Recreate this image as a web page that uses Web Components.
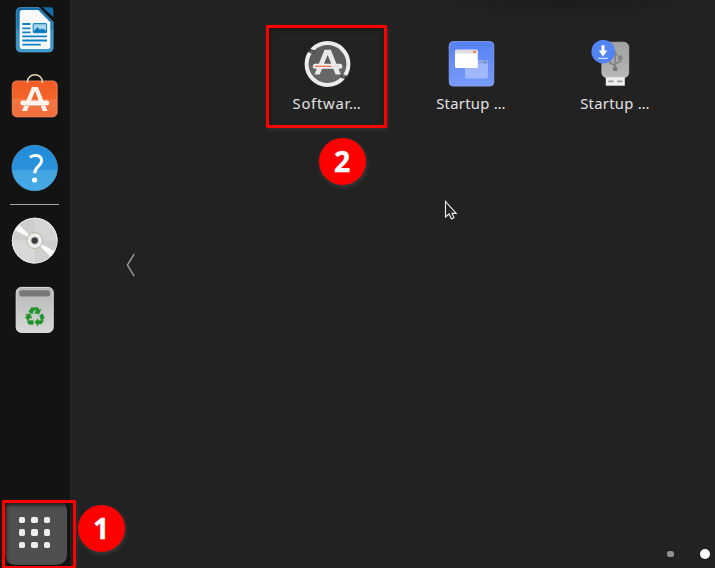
<!DOCTYPE html>
<html lang="en"><head><meta charset="utf-8"><title>Applications</title>
<style>html,body{margin:0;height:100%;overflow:hidden;background:#222}</style></head>
<body><desktop-shell></desktop-shell>
<script>
const define=(name,html)=>customElements.define(name,class extends HTMLElement{
  constructor(){super();this.attachShadow({mode:'open'}).innerHTML=html;}
});

define('icon-writer',`<style>:host,svg{display:block}</style>
<svg width="70" height="62" viewBox="0 0 70 62"><defs><linearGradient id="g" x2="0" y2="1"><stop stop-color="#106fae"/><stop offset=".49" stop-color="#1f7fba"/><stop offset=".5" stop-color="#3790c3"/><stop offset="1" stop-color="#3a9ccd"/></linearGradient></defs>
<path d="M21 7.5H39L53.2 22V47.3Q53.2 52 48.5 52H21Q16.2 52 16.2 47.3V12.3Q16.2 7.5 21 7.5Z" fill="url(#g)" stroke="#65aed8" stroke-width=".6"/>
<path d="M42.5 7.3H50Q53.3 7.3 53.3 10.5V17Z" fill="#1470ac"/>
<path d="M22.5 10H38.3L50.3 22.2V46.5Q50.3 49 47.8 49H22.5Q19.7 49 19.7 46.2V12.8Q19.7 10 22.5 10Z" fill="#f9f9f9"/>
<path d="M22.3 24h8.2m-8.2 4.3h8.2m-8.2 4h8.2M22.3 36.3H47M22.3 40.5H47M22.3 44.6H40.7" stroke="#0c81c6" stroke-width="1.8"/>
<rect x="33.2" y="23.6" width="13.4" height="9" rx="1" fill="#a8d5f0" stroke="#1686c8" stroke-width="1.1"/><path d="M34 32V31l3.5-4 2.5 3 1.7-1.7 1.8 1.5 1-.8 2 3z" fill="#0878be"/></svg>`);

define('icon-store',`<style>:host,svg{display:block}</style>
<svg width="70" height="72" viewBox="0 62 70 72"><defs><linearGradient id="g" x2="0" y2="1"><stop stop-color="#f25b25"/><stop offset=".49" stop-color="#f46529"/><stop offset=".51" stop-color="#f57543"/><stop offset="1" stop-color="#ef6e3b"/></linearGradient></defs>
<rect x="12.2" y="80.9" width="45" height="36" rx="4.5" fill="url(#g)" stroke="#f49470" stroke-width=".7"/>
<path d="M27.5 83V81.5a7.4 6.8 0 0 1 14.8 0V83" fill="none" stroke="#e9dbb2" stroke-width="1.5"/>
<path d="M32 87H38L47.5 111H42.8L35 91 27 111H22Z" fill="#fff4ed"/>
<rect x="20.3" y="100.6" width="29" height="4.9" rx="2.4" fill="#fff4ed"/><path d="M22 105.6H47" stroke="#dfa78e" stroke-width=".7"/></svg>`);

define('icon-help',`<style>:host,svg{display:block}</style>
<svg width="70" height="69" viewBox="0 134 70 69"><defs><linearGradient id="g" x2="0" y2="1"><stop stop-color="#218bd9"/><stop offset=".54" stop-color="#2b93dc"/><stop offset=".55" stop-color="#41a3e1"/><stop offset="1" stop-color="#45aae6"/></linearGradient></defs>
<circle cx="34.7" cy="168" r="22.7" fill="url(#g)" stroke="#4ba6dc" stroke-width=".7"/><path d="M29.8 157.2Q33 155.4 36 155.6Q41.6 156 41.6 160.7C41.6 166.2 34.7 166 34.7 173.2" fill="none" stroke="#fff" stroke-width="3"/><circle cx="34.6" cy="180" r="2.6" fill="#fff"/></svg>`);

define('icon-disc',`<style>:host,svg{display:block}</style>
<svg width="70" height="70" viewBox="0 205 70 70"><circle cx="34.7" cy="240.6" r="22.8" fill="#cecece"/>
<path d="M34.7 240.6V217.8A22.8 22.8 0 0 1 57.5 240.6Z" fill="#d5d5d5"/><path d="M34.7 240.6V263.4A22.8 22.8 0 0 1 11.9 240.6Z" fill="#d8d8d8"/>
<path d="M34.7 240.6L14.8 230Q16.5 226.5 19 224.5ZM34.7 240.6L54.6 251.2Q52.9 254.7 50.4 256.7Z" fill="#fbfbfb"/>
<circle cx="34.7" cy="240.6" r="22.4" fill="none" stroke="#eee" stroke-width=".8"/><circle cx="34.7" cy="240.6" r="7.9" fill="#eee" stroke="#b8b39c" stroke-width="1"/><circle cx="34.7" cy="240.6" r="4.2" fill="#bbb"/><circle cx="34.7" cy="240.6" r="3.1" fill="#3c3c3c"/></svg>`);

define('icon-trash',`<style>:host,svg{display:block}</style>
<svg width="70" height="70" viewBox="0 275 70 70"><defs><linearGradient id="g" x2="0" y2="1"><stop stop-color="#b6b6b6"/><stop offset="1" stop-color="#d8d8d8"/></linearGradient></defs>
<rect x="16.2" y="287.4" width="37" height="45" rx="5" fill="url(#g)" stroke="#e3e3e3"/><rect x="19.3" y="290.2" width="30.7" height="6.2" rx="2.5" fill="#777"/>
<g fill="#20942a" stroke="#20942a" stroke-width=".4"><path d="M28.7 311.9L31.2 307.7H36L33.6 311.3 32.2 313.9Z"/><path d="M35 307.6H37.8L39.3 310 41 309.2 39 314.1 34.2 313.2 35.8 312.2Z"/><path d="M39.7 315.4L42.6 313.8 44.2 317.2Q44.3 319 42.2 320.1H41Z"/><path d="M34.7 322.1L38 318.6V320.6H43.7L41.4 324.1H38V326.3Z"/><path d="M27.2 320.6H33.3V324.4H29.4Q28.5 324.2 28 323.3Z"/><path d="M25.5 314.5L30.3 313.7 31.9 318.4 30.2 317.5 28.8 319.8H27.2L25.5 317.6 27 315.3Z"/></g></svg>`);

define('icon-updater',`<style>:host,svg{display:block}</style>
<svg width="48" height="48" viewBox="303 40 48 48"><circle cx="327.5" cy="64" r="19.5" fill="#5d5d5d"/><path d="M308.5 66H346.5A19.3 19.3 0 0 1 308.5 66Z" fill="#676767"/>
<circle cx="327.5" cy="64" r="20.9" fill="none" stroke="#ececec" stroke-width="4"/>
<path d="M308.5 50.2L314.3 52.3M346.6 77.8L341 75.7" stroke="#333" stroke-width="3.6"/><circle cx="311.7" cy="51.8" r="1.9" fill="#666"/><circle cx="343.5" cy="76.4" r="1.9" fill="#666"/>
<path d="M324.5 49.8H330.8L340.8 74.5H335.6L327.6 54.9 319.7 74.5H314.5Z" fill="#e8e8e8"/><rect x="312.8" y="63.8" width="29.5" height="5" rx="2.5" fill="#eee"/><path d="M315 66.3H331.2" stroke="#ee714a" stroke-width="1.3"/><path d="M331.2 66.3H339" stroke="#ccc" stroke-width=".9"/></svg>`);

define('icon-windows',`<style>:host,svg{display:block}</style>
<svg width="48" height="48" viewBox="447 40 48 48"><defs><linearGradient id="g" x2="0" y2="1"><stop stop-color="#5681f2"/><stop offset="1" stop-color="#789bfa"/></linearGradient></defs>
<rect x="449.2" y="41.6" width="44.6" height="44.5" rx="4" fill="url(#g)" stroke="#8aa8f8" stroke-width=".8"/>
<rect x="465" y="60.2" width="23" height="18.2" rx="1.5" fill="#a0b7fb"/><path d="M466 60.2H486.5Q488 60.2 488 61.7V64H465V61Q465 60.2 466 60.2" fill="#8da6e5"/><circle cx="484.8" cy="62.1" r="1.1" fill="#6680ba"/>
<rect x="455" y="49.8" width="22.8" height="18.2" rx="1.5" fill="#fff"/><path d="M456.5 49.8H476.3Q477.8 49.8 477.8 51.3V53.5H455V51.3Q455 49.8 456.5 49.8" fill="#dedede"/><circle cx="474.6" cy="51.9" r="1.4" fill="#e97750"/></svg>`);

define('icon-usb',`<style>:host,svg{display:block}</style>
<svg width="48" height="48" viewBox="591 40 48 48"><defs><linearGradient id="g" x2="0" y2="1"><stop stop-color="#a0a0a0"/><stop offset="1" stop-color="#b8b8b8"/></linearGradient></defs>
<rect x="601.8" y="42.2" width="27" height="35.5" rx="5" fill="url(#g)" stroke="#c2c2c2" stroke-width=".6"/><rect x="605.8" y="77.2" width="19" height="8.5" fill="#eee"/><path d="M608.4 81.4H613.4M617.3 81.4H622.3" stroke="#999" stroke-width="1.7"/>
<path d="M615.2 69V54M615.2 66L609.8 62.5V58M615.2 64L620.4 61V57" stroke="#828282" stroke-width="1.7" fill="none"/><path d="M612.5 55.5L615.2 50.5 617.9 55.5Z" fill="#828282"/><rect x="618" y="55.5" width="4.5" height="4.2" fill="#828282"/><circle cx="609.7" cy="58.5" r="2" fill="#828282"/><rect x="613" y="67" width="4.4" height="4" rx="1" fill="#777"/>
<circle cx="603.2" cy="51.7" r="11.8" fill="#5484f1"/><path d="M601.5 45.2H604.5V50.5H607.3L603 56.4 598.8 50.5H601.5Z" fill="#fff"/><path d="M598 58.3H608" stroke="#e8efff" stroke-width="1"/></svg>`);

define('app-tile',`<style>:host{display:flex;flex-direction:column;align-items:center;width:144px;font:14.8px/20px "Noto Sans",sans-serif;color:#e3e3e3}slot[name]{display:block}.label{margin-top:5px;height:20px;white-space:nowrap;letter-spacing:var(--track,.3px)}</style><slot name="icon"></slot><div class="label"><slot></slot></div>`);

define('step-badge',`<style>:host{display:flex;align-items:center;justify-content:center;width:47.5px;height:47.5px;border-radius:50%;background:#fe0000;color:#fff;font:700 28.5px/48px "Open Sans","Noto Sans",sans-serif;-webkit-text-stroke:.3px #fff;box-shadow:1px 2px 4px #3c3c3c}</style><slot></slot>`);

define('focus-frame',`<style>:host{display:block;box-sizing:border-box;border:3px solid #fe0000;border-radius:1px;box-shadow:1px 2px 4px #333,inset 1px 2px 4px #181818}</style>`);

define('dock-grid',`<style>:host{display:flex;align-items:center;justify-content:center;width:62px;height:65px;margin:0 0 3px 5px;border-radius:10px;background:#4f4f4f}
.dots{display:grid;grid-template-columns:repeat(3,6.3px);gap:6px;margin-right:3px}i{height:6.3px;border-radius:1.7px;background:#ededed}</style><div class="dots">${'<i></i>'.repeat(9)}</div>`);

define('side-dock',`<style>:host{display:flex;flex-direction:column;width:70px;background:#131313}.line{height:1.5px;width:49px;margin:.5px 0 0 10px;background:#a8a8a8}.space{flex:1}</style>
<icon-writer></icon-writer><icon-store></icon-store><icon-help></icon-help><div class="line"></div><icon-disc></icon-disc><icon-trash></icon-trash><div class="space"></div><dock-grid></dock-grid>`);

define('page-dots',`<style>:host{display:flex;align-items:center;justify-content:flex-end;gap:26px;padding:0 5px 9px 0}i{border-radius:50%;background:#fff;width:10.5px;height:10.5px}.small{width:6.5px;height:6.5px;border-radius:2.5px;background:#929292}</style><i class="small"></i><i></i>`);

define('app-overview',`<style>:host{display:flex;flex-direction:column;flex:1;background:radial-gradient(ellipse 130px 18px at 495px 0,#1b1b1b,#222 100%)}
.row{display:flex;padding:40px 0 0 185px}.middle{flex:1;padding:138px 0 0 54px}svg{display:block}.first{--track:.75px}</style>
<div class="row"><app-tile class="first"><icon-updater slot="icon"></icon-updater>Softwar…</app-tile><app-tile><icon-windows slot="icon"></icon-windows>Startup …</app-tile><app-tile><icon-usb slot="icon"></icon-usb>Startup …</app-tile></div>
<div class="middle"><svg width="14" height="28" viewBox="124 251 14 28"><path d="M134.2 254L127.4 265.1 134.2 276.2" fill="none" stroke="#969696" stroke-width="1.5"/></svg></div><page-dots></page-dots>`);

define('mouse-pointer',`<style>:host,svg{display:block}</style><svg width="16" height="22" viewBox="443 199 16 22"><path d="M445.5 201.5V217L449 214 451.5 219 454 217.8 452 213.4H456.2Z" fill="#252525" stroke="#eee" stroke-width="1.1"/></svg>`);

define('desktop-shell',`<style>:host{display:flex;position:relative;width:715px;height:568px;overflow:hidden}
.over{position:absolute}.f1{left:2px;top:500px;width:74px;height:69px}.f2{left:266px;top:25px;width:121px;height:103px}.b1{left:77.5px;top:504.5px}.b2{left:318.5px;top:137.5px}.p{left:443px;top:199px}</style>
<side-dock></side-dock><app-overview></app-overview><focus-frame class="over f1"></focus-frame><focus-frame class="over f2"></focus-frame><step-badge class="over b1">1</step-badge><step-badge class="over b2">2</step-badge><mouse-pointer class="over p"></mouse-pointer>`);
</script></body></html>
